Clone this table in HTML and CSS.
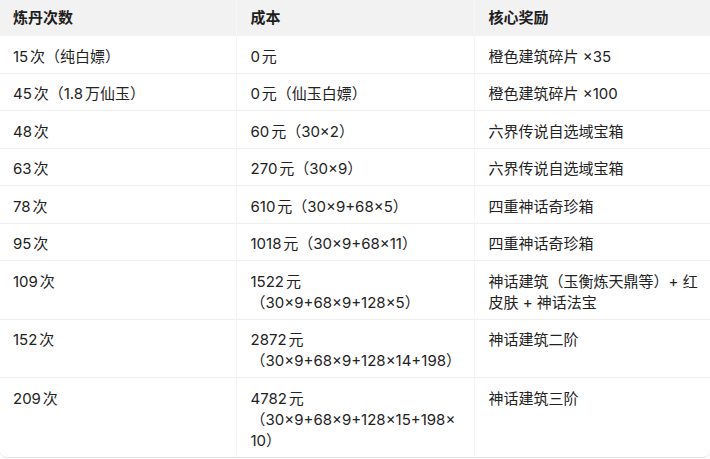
FILE: index.html
```html
<!DOCTYPE html>
<html lang="zh-CN">
<head>
<meta charset="utf-8">
<title>炼丹次数</title>
<link rel="stylesheet" href="styles.css">
</head>
<body>
<div class="card">
<table class="grid">
<colgroup><col class="c1"><col class="c2"><col class="c3"></colgroup>
<thead>
<tr><th>炼丹次数</th><th>成本</th><th>核心奖励</th></tr>
</thead>
<tbody>
<tr><td>15次（纯白嫖）</td><td>0元</td><td>橙色建筑碎片 ×35</td></tr>
<tr><td>45次（1.8万仙玉）</td><td>0元（仙玉白嫖）</td><td>橙色建筑碎片 ×100</td></tr>
<tr><td>48次</td><td>60元（30×2）</td><td>六界传说自选域宝箱</td></tr>
<tr><td>63次</td><td>270元（30×9）</td><td>六界传说自选域宝箱</td></tr>
<tr><td>78次</td><td>610元（30×9+68×5）</td><td>四重神话奇珍箱</td></tr>
<tr><td>95次</td><td>1018元（30×9+68×11）</td><td>四重神话奇珍箱</td></tr>
<tr><td>109次</td><td>1522元<br>（30×9+68×9+128×5）</td><td>神话建筑（玉衡炼天鼎等）+ 红<br>皮肤 + 神话法宝</td></tr>
<tr><td>152次</td><td>2872元<br>（30×9+68×9+128×14+198）</td><td>神话建筑二阶</td></tr>
<tr><td>209次</td><td>4782元<br>（30×9+68×9+128×15+198×<br>10）</td><td>神话建筑三阶</td></tr>
</tbody>
</table>
</div>
</body>
</html>
```
FILE: styles.css
```css
html, body {
  margin: 0;
  padding: 0;
  background: #ffffff;
}
body {
  width: 710px;
  height: 459px;
  overflow: hidden;
  font-family: "Inter", "Noto Sans CJK SC", sans-serif;
  color: #222222;
}
.card {
  width: 710px;
  border-bottom: 1px solid #e2e2e2;
  border-radius: 0 0 7px 7px;
  overflow: hidden;
}
.grid {
  width: 710px;
  border-collapse: collapse;
  table-layout: fixed;
  font-size: 15px;
  text-autospace: normal;
}
.c1 { width: 236px; }
.c2 { width: 238px; }
.c3 { width: 236px; }
.grid th {
  background: #f2f2f2;
  font-weight: 600;
  text-align: left;
  height: 35px;
  padding: 0 0 1px 14px;
  line-height: 21px;
  border-left: 1px solid #f7f7f7;
  color: #1e1e1e;
}
.grid td {
  vertical-align: top;
  padding: 9.5px 8px 6px 14px;
  line-height: 21px;
  border-top: 1px solid #efefef;
  border-left: 1px solid #f4f4f4;
}
.grid th:first-child,
.grid td:first-child {
  border-left: none;
  padding-left: 13px;
}
.grid tbody tr:first-child td {
  border-top: none;
}
```
